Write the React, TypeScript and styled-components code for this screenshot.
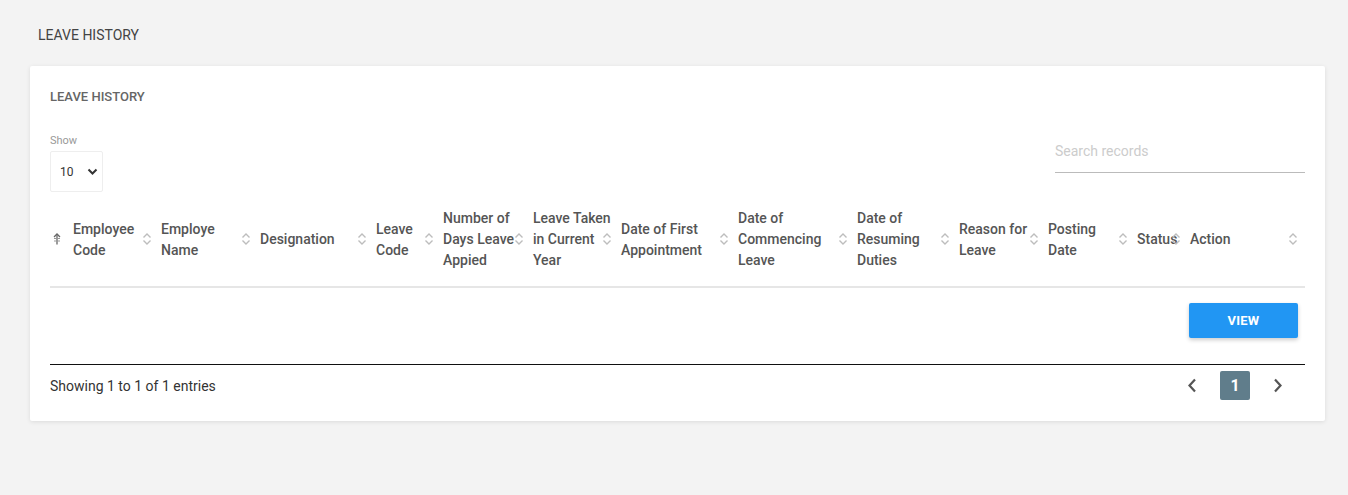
import React from "react";
import styled, { createGlobalStyle } from "styled-components";

const GlobalStyle = createGlobalStyle`
  html, body { margin: 0; padding: 0; background: #f3f3f3; }
  body { font-family: Roboto, "Liberation Sans", Arial, sans-serif; color: #333; }
  * { box-sizing: border-box; }
`;

const Page = styled.div`
  padding: 24px 23px 40px 30px;
`;

const PageTitle = styled.h1`
  margin: 0 0 20px;
  padding-left: 8px;
  font-size: 14px;
  line-height: 22px;
  font-weight: 400;
  color: #444;
  text-transform: uppercase;
`;

const Card = styled.section`
  background: #fff;
  border-radius: 2px;
  box-shadow: 0 1px 4px rgba(0, 0, 0, 0.1);
  padding: 20px 20px 21px;
`;

const CardTitle = styled.h2`
  margin: 0 0 26px;
  font-size: 13px;
  line-height: 22px;
  font-weight: 500;
  color: #666;
`;

const Controls = styled.div`
  display: flex;
  justify-content: space-between;
  align-items: flex-start;
`;

const LengthBox = styled.div`
  display: flex;
  flex-direction: column;
  gap: 3px;
`;

const ShowLabel = styled.label`
  font-size: 11px;
  line-height: 14px;
  color: #999;
`;

const SelectWrap = styled.div`
  position: relative;
  width: 53px;
  height: 41px;
`;

const Select = styled.select`
  appearance: none;
  -webkit-appearance: none;
  width: 100%;
  height: 100%;
  border: 1px solid #eee;
  border-radius: 2px;
  background: #fff;
  padding: 0 0 0 9px;
  font-family: inherit;
  font-size: 12px;
  color: #333;
  outline: none;
`;

const Chevron = styled.svg`
  position: absolute;
  right: 5px;
  top: 17px;
  pointer-events: none;
`;

const Search = styled.input`
  width: 250px;
  height: 37px;
  margin-top: 2px;
  border: none;
  border-bottom: 1px solid #bbb;
  padding: 0 0 7px;
  font-family: inherit;
  font-size: 14px;
  color: #333;
  outline: none;
  background: transparent;
  &::placeholder { color: #ccc; }
`;

const COLS = "23px 88px 99px 116px 67px 90px 88px 117px 119px 102px 89px 89px 53px 115px";

const HeadRow = styled.div`
  display: grid;
  grid-template-columns: ${COLS};
  border-bottom: 2px solid #e6e6e6;
`;

const Th = styled.div`
  position: relative;
  padding: 16px 10px 15px 0;
  display: flex;
  align-items: center;
  font-size: 14px;
  line-height: 21px;
  font-weight: 500;
  color: #555;
`;

const SortIcon = styled.svg<{ $right: number }>`
  position: absolute;
  right: ${(p) => p.$right}px;
  top: 50%;
  margin-top: -8px;
`;

const BodyRow = styled.div`
  display: grid;
  grid-template-columns: ${COLS};
  padding: 15px 0 26px;
  border-bottom: 1px solid #111;
`;

const ActionCell = styled.div`
  grid-column: 14;
  margin-left: -1px;
`;

const ViewButton = styled.button`
  width: 109px;
  height: 35px;
  border: none;
  border-radius: 2px;
  background: #2196f3;
  color: #fff;
  font-family: inherit;
  font-size: 13px;
  font-weight: 700;
  letter-spacing: 0.2px;
  box-shadow: 0 2px 4px rgba(0, 0, 0, 0.2);
  cursor: pointer;
`;

const Footer = styled.div`
  display: flex;
  justify-content: space-between;
  align-items: center;
  padding-top: 6px;
`;

const Info = styled.div`
  font-size: 14px;
  color: #333;
`;

const Pager = styled.div`
  display: flex;
  align-items: center;
  gap: 13px;
  margin-right: 12px;
`;

const PageArrow = styled.button`
  width: 30px;
  height: 29px;
  border: none;
  background: transparent;
  display: flex;
  align-items: center;
  justify-content: center;
  padding: 0;
  cursor: pointer;
`;

const PageNum = styled.button<{ $active?: boolean }>`
  width: 30px;
  height: 29px;
  border: none;
  border-radius: 2px;
  background: ${(p) => (p.$active ? "#607d8b" : "transparent")};
  color: ${(p) => (p.$active ? "#fff" : "#555")};
  font-family: inherit;
  font-size: 16px;
  font-weight: 700;
  padding: 0;
`;

const Sort = ({ right = 9 }: { right?: number }) => (
  <SortIcon $right={right} width="10" height="16" viewBox="0 0 10 16">
    <polyline points="1.5,6.5 5,3 8.5,6.5" fill="none" stroke="#bdbdbd" strokeWidth="1.4" />
    <polyline points="1.5,9.5 5,13 8.5,9.5" fill="none" stroke="#bdbdbd" strokeWidth="1.4" />
  </SortIcon>
);

const SortAsc = () => (
  <SortIcon $right={11} width="10" height="16" viewBox="0 0 10 16">
    <polyline points="2,6 5,3 8,6" fill="none" stroke="#666" strokeWidth="1.3" />
    <line x1="5" y1="3" x2="5" y2="13.5" stroke="#666" strokeWidth="1.3" />
    <line x1="2" y1="7.5" x2="8" y2="7.5" stroke="#999" strokeWidth="1" />
    <line x1="2" y1="10" x2="8" y2="10" stroke="#999" strokeWidth="1" />
  </SortIcon>
);

const headers = [
  "Employee Code",
  "Employe Name",
  "Designation",
  "Leave Code",
  "Number of Days Leave Appied",
  "Leave Taken in Current Year",
  "Date of First Appointment",
  "Date of Commencing Leave",
  "Date of Resuming Duties",
  "Reason for Leave",
  "Posting Date",
  "Status",
  "Action",
];

export default function App() {
  return (
    <>
      <GlobalStyle />
      <Page>
        <PageTitle>Leave History</PageTitle>
        <Card>
          <CardTitle>LEAVE HISTORY</CardTitle>
          <Controls>
            <LengthBox>
              <ShowLabel>Show</ShowLabel>
              <SelectWrap>
                <Select defaultValue="10">
                  <option value="10">10</option>
                  <option value="25">25</option>
                  <option value="50">50</option>
                  <option value="100">100</option>
                </Select>
                <Chevron width="11" height="8" viewBox="0 0 11 8">
                  <polyline points="1.5,1.5 5.5,5.5 9.5,1.5" fill="none" stroke="#333" strokeWidth="2" />
                </Chevron>
              </SelectWrap>
            </LengthBox>
            <Search placeholder="Search records" />
          </Controls>
          <HeadRow>
            <Th>
              <SortAsc />
            </Th>
            {headers.map((h) => (
              <Th key={h}>
                {h}
                <Sort right={h === "Action" ? 7 : 9} />
              </Th>
            ))}
          </HeadRow>
          <BodyRow>
            <ActionCell>
              <ViewButton>VIEW</ViewButton>
            </ActionCell>
          </BodyRow>
          <Footer>
            <Info>Showing 1 to 1 of 1 entries</Info>
            <Pager>
              <PageArrow aria-label="Previous">
                <svg width="10" height="15" viewBox="0 0 10 15">
                  <polyline points="8,1.5 2.5,7.5 8,13.5" fill="none" stroke="#555" strokeWidth="2.2" />
                </svg>
              </PageArrow>
              <PageNum $active>1</PageNum>
              <PageArrow aria-label="Next">
                <svg width="10" height="15" viewBox="0 0 10 15">
                  <polyline points="2,1.5 7.5,7.5 2,13.5" fill="none" stroke="#555" strokeWidth="2.2" />
                </svg>
              </PageArrow>
            </Pager>
          </Footer>
        </Card>
      </Page>
    </>
  );
}
